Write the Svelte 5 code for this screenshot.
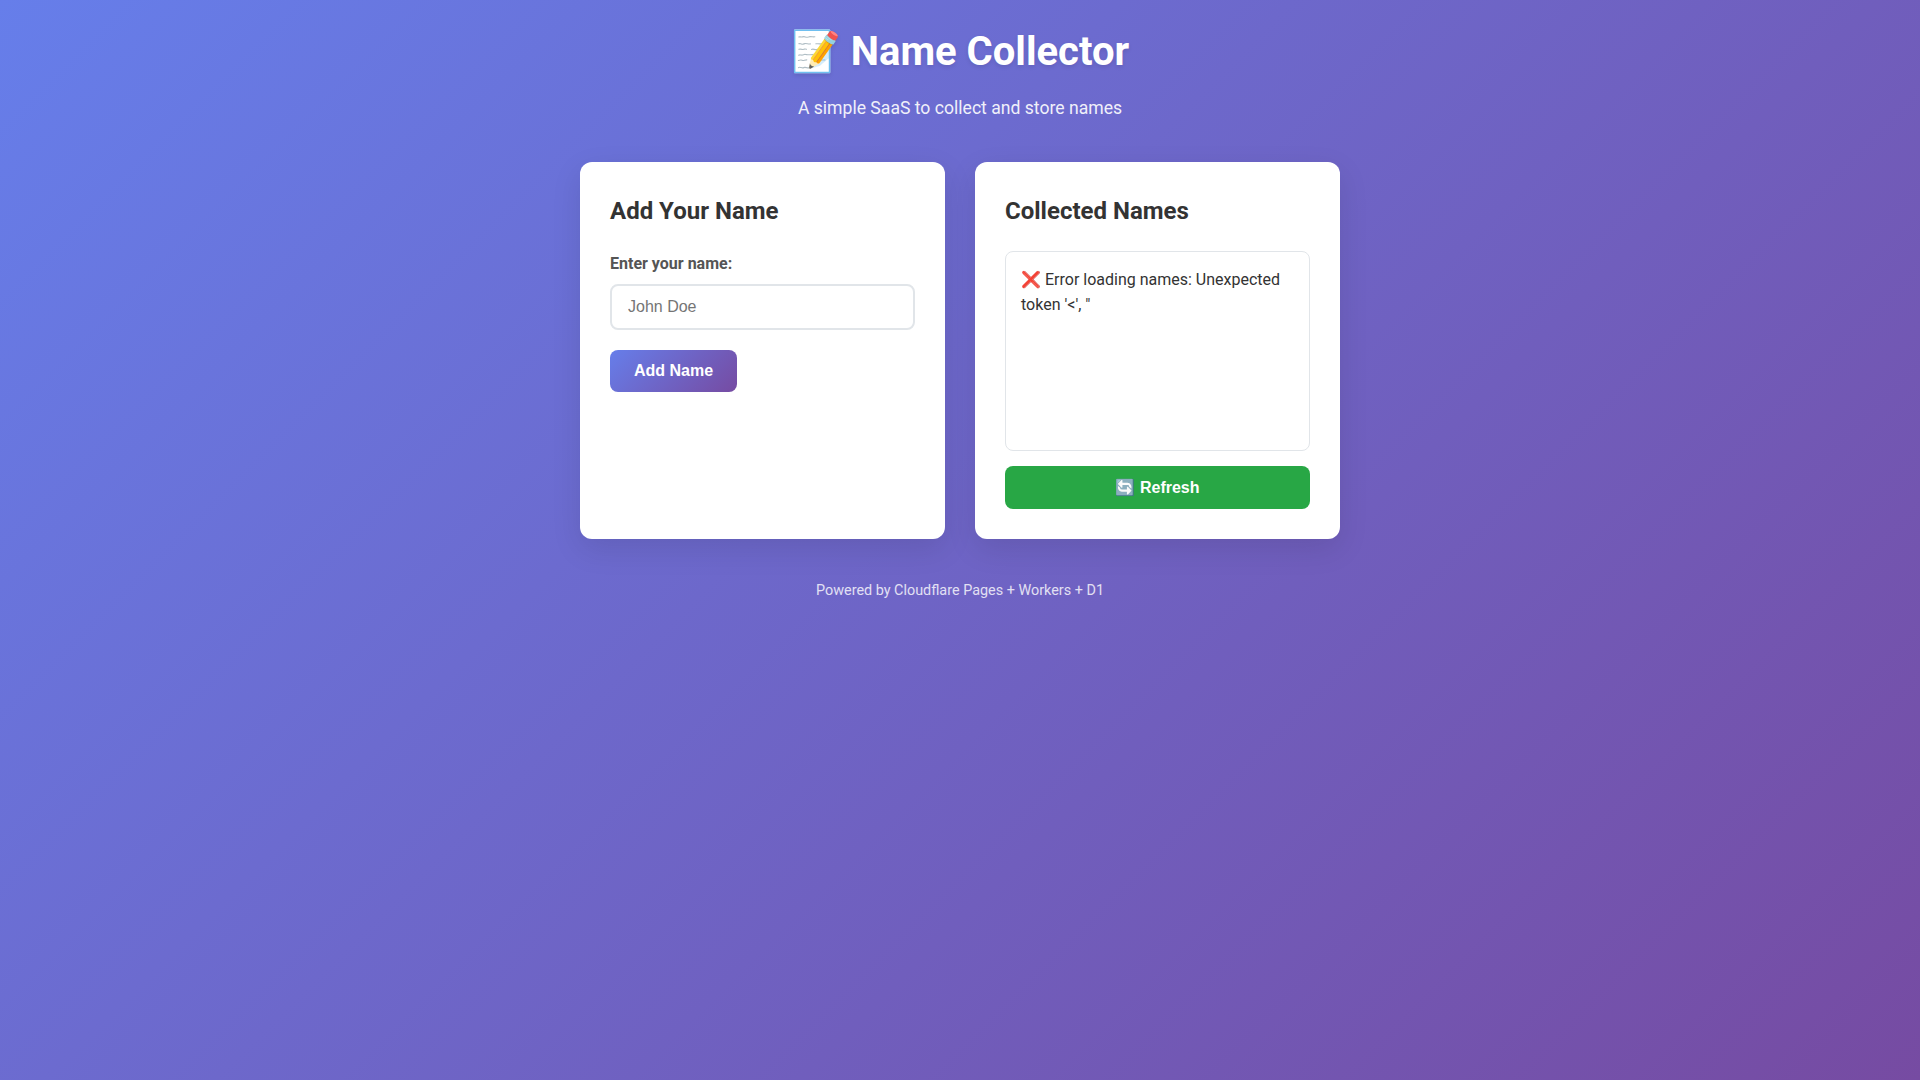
<script>
  let name = $state("");
  let error = "Error loading names: Unexpected token '<', \"";
</script>

<div class="container">
  <header>
    <h1>📝 Name Collector</h1>
    <p>A simple SaaS to collect and store names</p>
  </header>

  <main class="cards">
    <section class="card">
      <h2>Add Your Name</h2>
      <form onsubmit={(e) => e.preventDefault()}>
        <label for="name">Enter your name:</label>
        <input id="name" type="text" placeholder="John Doe" bind:value={name} />
        <button class="add" type="submit">Add Name</button>
      </form>
    </section>

    <section class="card">
      <h2>Collected Names</h2>
      <div class="names">❌ {error}</div>
      <button class="refresh" type="button">🔄 Refresh</button>
    </section>
  </main>

  <footer>Powered by Cloudflare Pages + Workers + D1</footer>
</div>

<style>
  :global(body) {
    margin: 0;
    min-height: 100vh;
    background: linear-gradient(135deg, #667eea 0%, #764ba2 100%);
    font-family: Roboto, sans-serif;
    line-height: 1.6;
  }

  .container {
    box-sizing: border-box;
    max-width: 800px;
    margin: 0 auto;
    padding: 20px;
  }

  header {
    text-align: center;
    color: #fff;
    margin-bottom: 40px;
  }

  h1 {
    margin: 0 0 10px;
    font-size: 40px;
    font-weight: 700;
    text-shadow: 0 2px 4px rgba(0, 0, 0, 0.1);
  }

  header p {
    margin: 0;
    font-size: 17.6px;
    opacity: 0.9;
  }

  .cards {
    display: grid;
    grid-template-columns: 1fr 1fr;
    gap: 30px;
  }

  .card {
    box-sizing: border-box;
    background: #fff;
    border-radius: 12px;
    padding: 30px;
    box-shadow: 0 10px 30px rgba(0, 0, 0, 0.1);
  }

  h2 {
    margin: 0 0 20px;
    color: #333;
    font-size: 24px;
    font-weight: 700;
  }

  label {
    display: block;
    margin-bottom: 8px;
    color: #555;
    font-size: 16px;
    font-weight: 700;
  }

  input {
    box-sizing: border-box;
    display: block;
    width: 100%;
    padding: 12px 16px;
    margin-bottom: 20px;
    border: 2px solid #e1e5e9;
    border-radius: 8px;
    background: #fff;
    font-family: "Liberation Sans", Arial, sans-serif;
    font-size: 16px;
    outline: none;
  }

  input::placeholder {
    color: #757575;
  }

  button {
    padding: 12px 24px;
    border: none;
    border-radius: 8px;
    color: #fff;
    font-family: "Liberation Sans", Arial, sans-serif;
    font-size: 16px;
    font-weight: 700;
    cursor: pointer;
  }

  .add {
    background: linear-gradient(135deg, #667eea 0%, #764ba2 100%);
  }

  .names {
    box-sizing: border-box;
    height: 200px;
    margin-bottom: 15px;
    padding: 15px;
    border: 1px solid #e1e5e9;
    border-radius: 8px;
    color: #333;
    font-size: 16px;
    overflow-y: auto;
  }

  .refresh {
    display: block;
    width: 100%;
    background: #28a745;
  }

  footer {
    margin-top: 40px;
    text-align: center;
    color: #fff;
    font-size: 14.4px;
    opacity: 0.8;
  }
</style>
